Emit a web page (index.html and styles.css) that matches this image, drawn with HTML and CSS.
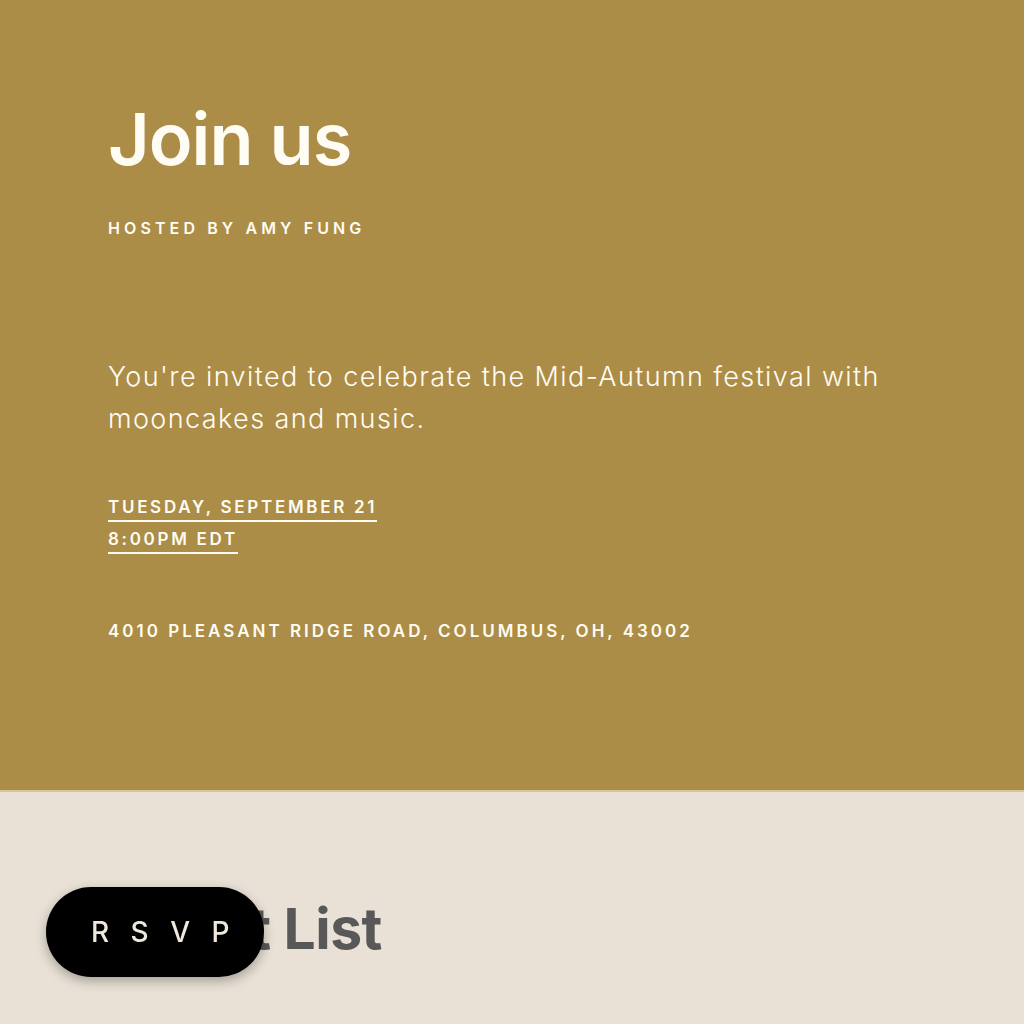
FILE: index.html
```html
<!DOCTYPE html>
<html lang="en">
<head>
    <meta charset="UTF-8">
    <meta name="viewport" content="width=device-width, initial-scale=1.0">
    <title>Join us</title>
    <link rel="stylesheet" href="styles.css">
</head>
<body>

<header class="hero">
    <h1 class="hero-title">Join us</h1>
    <p class="host">Hosted by Amy Fung</p>

    <p class="invite">You're invited to celebrate the Mid-Autumn festival with mooncakes and music.</p>

    <div class="when">
        <a href="#">Tuesday, September 21</a>
        <a href="#">8:00PM EDT</a>
    </div>

    <p class="where">4010 Pleasant Ridge Road, Columbus, OH, 43002</p>
</header>

<section class="guests">
    <h2 class="guests-title">Guest List</h2>
</section>

<button class="rsvp" type="button">RSVP</button>

</body>
</html>
```

FILE: styles.css
```css
body {
    margin: 0;
    font-family: Inter, "Noto Sans", sans-serif;
    background-color: #e9e1d5;
}

.hero {
    box-sizing: border-box;
    height: 792px;
    padding: 99px 108px 0;
    background-color: #ab8d48;
    border-bottom: 2px solid #d6c597;
    color: #fffcf3;
}

.hero-title {
    margin: 0;
    font-size: 72px;
    line-height: 80px;
    font-weight: 600;
    letter-spacing: -1px;
}

.host {
    margin: 39px 0 0;
    font-size: 16px;
    line-height: 20px;
    font-weight: 600;
    letter-spacing: 4.1px;
    text-transform: uppercase;
}

.invite {
    max-width: 820px;
    margin: 118px 0 0;
    font-size: 27px;
    line-height: 42px;
    font-weight: 300;
    letter-spacing: 1.4px;
}

.when {
    margin-top: 56px;
}

.when a {
    display: table;
    margin-bottom: 6px;
    padding-bottom: 2px;
    border-bottom: 2px solid #fffcf3;
    color: inherit;
    text-decoration: none;
    font-size: 17px;
    line-height: 22px;
    font-weight: 600;
    letter-spacing: 2.7px;
    text-transform: uppercase;
}

.where {
    margin: 66px 0 0;
    font-size: 17px;
    line-height: 22px;
    font-weight: 600;
    letter-spacing: 3px;
    text-transform: uppercase;
}

.guests {
    padding: 102px 108px 60px;
}

.guests-title {
    margin: 0;
    font-size: 57px;
    line-height: 70px;
    font-weight: 700;
    color: #585858;
    letter-spacing: -0.5px;
}

.rsvp {
    position: fixed;
    left: 46px;
    bottom: 47px;
    width: 218px;
    height: 90px;
    border: none;
    border-radius: 45px;
    background-color: #000;
    color: #efe8dc;
    font-family: Inter, "Noto Sans", sans-serif;
    font-size: 28px;
    font-weight: 500;
    letter-spacing: 21.5px;
    text-indent: 32px;
    box-shadow: 0 4px 12px rgba(0, 0, 0, 0.3);
    cursor: pointer;
}
```
